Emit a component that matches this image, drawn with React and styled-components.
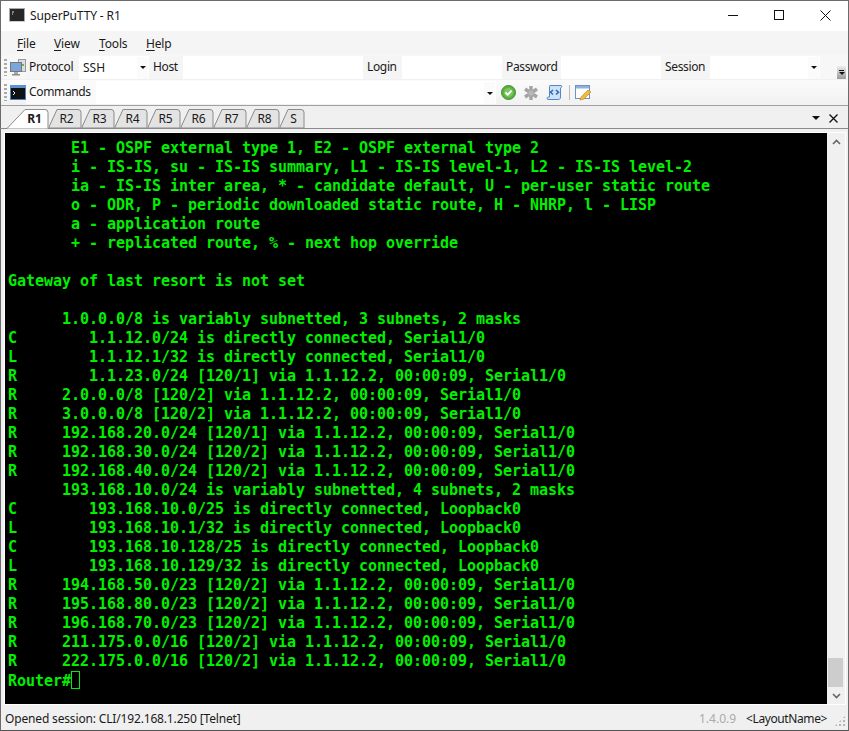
import React from "react";
import styled, { createGlobalStyle } from "styled-components";

const Global = createGlobalStyle`
  html, body { margin: 0; padding: 0; background: #fff; }
  body { width: 849px; height: 731px; overflow: hidden; }
`;

const Win = styled.div`
  width: 849px;
  height: 731px;
  box-sizing: border-box;
  border: 1px solid #6b6b6b;
  border-bottom-color: #555;
  display: flex;
  flex-direction: column;
  font-family: "Noto Sans", "Open Sans", sans-serif;
  color: #1a1a1a;
  background: #f0f0f0;
`;

const TitleBar = styled.div`
  height: 30px;
  background: #fff;
  display: flex;
  align-items: center;
  padding: 0 0 2px 8px;
  box-sizing: border-box;
  flex: none;
`;
const TitleText = styled.div`
  font-size: 12px;
  margin-left: 5px;
  flex: 1;
  letter-spacing: -0.13px;
`;
const WinBtn = styled.div`
  width: 46px;
  height: 28px;
  display: flex;
  align-items: center;
  justify-content: center;
  padding-left: 1px;
  box-sizing: border-box;
`;

const MenuBar = styled.div`
  height: 24px;
  background: #f5f5f5;
  display: flex;
  align-items: center;
  padding-left: 9px;
  font-size: 12px;
  flex: none;
`;
const MenuItem = styled.div`
  padding: 0 7px;
  width: ${p => p.$w}px;
  box-sizing: content-box;
  letter-spacing: -0.15px;
  span { text-decoration: underline; text-underline-offset: 2px; }
`;

const ToolRow = styled.div`
  height: ${p => p.$grad ? 26 : 25}px;
  background: ${p => p.$grad ? "linear-gradient(#fbfbfb, #f1f1f1)" : "#f7f7f7"};
  border-bottom: 1px solid ${p => p.$grad ? "#a0a0a0" : "#f0f0f0"};
  box-sizing: border-box;
  display: flex;
  align-items: center;
  flex: none;
  font-size: 12px;
`;
const Grip = styled.div`
  width: 3px;
  height: 17px;
  margin: 0 3px 0 3px;
  flex: none;
  background: repeating-linear-gradient(#aaa 0 2px, transparent 2px 4px);
`;
const ToolLabel = styled.div`
  padding-left: ${p => p.$pl || 4}px;
  height: 23px;
  line-height: 22px;
  background: ${p => p.$pale ? "#fafafa" : "#f5f5f5"};
  white-space: nowrap;
  width: ${p => p.$w}px;
  box-sizing: border-box;
  flex: none;
  letter-spacing: -0.35px;
`;
const Field = styled.div`
  width: ${p => p.$w}px;
  height: 23px;
  background: #fff;
  flex: none;
  display: flex;
  align-items: center;
  padding-left: 4px;
  box-sizing: border-box;
  font-size: 12px;
  padding-top: 1px;
`;
const Drop = styled.div`
  width: 11px;
  height: 100%;
  margin-left: auto;
  margin-right: 1px;
  display: flex;
  align-items: center;
  justify-content: center;
  background: #fbfbfb;
  &::after {
    content: "";
    border-left: 3px solid transparent;
    border-right: 3px solid transparent;
    border-top: 3px solid #111;
  }
`;
const Overflow = styled.div`
  width: 9px;
  height: 13px;
  margin: 0 2px 0 auto;
  align-self: flex-end;
  background: linear-gradient(#eee, #999);
  display: flex;
  flex-direction: column;
  align-items: center;
  justify-content: center;
  gap: 1px;
  &::before { content: ""; width: 5px; height: 1px; background: #111; }
  &::after {
    content: "";
    border-left: 3px solid transparent;
    border-right: 3px solid transparent;
    border-top: 3px solid #111;
  }
`;
const IconSlot = styled.div`
  flex: none;
  display: flex;
  align-items: center;
  margin-left: ${p => p.$ml || 0}px;
`;
const Sep = styled.div`
  width: 1px;
  height: 15px;
  background: #bbb;
  margin: 0 5px 0 6px;
`;

const TabStrip = styled.div`
  height: 22px;
  background: #f0f0f0;
  display: flex;
  align-items: flex-end;
  flex: none;
  padding-left: 6px;
`;
const TabsEnd = styled.div`
  margin-left: auto;
  align-self: center;
  display: flex;
  align-items: center;
  gap: 8px;
  margin: 3px 10px 0 auto;
`;
const Tab = styled.div`
  height: 19px;
  width: ${p => p.$w}px;
  box-sizing: border-box;
  position: relative;
  font-size: 12px;
  font-weight: ${p => p.$on ? 700 : 400};
  letter-spacing: -0.2px;
  display: flex;
  align-items: center;
  justify-content: center;
  padding-left: ${p => p.$on ? 13 : 2}px;
  color: #1a1a1a;
  flex: none;
  z-index: ${p => p.$on ? 2 : 1};
`;
const TabShape = styled.svg`
  position: absolute;
  left: 0;
  top: 0;
  overflow: visible;
`;
const TabLabel = styled.span`
  position: relative;
`;

const Body = styled.div`
  flex: 1;
  min-height: 0;
  background: #f0f0f0;
  border-top: 1px solid #8a8a8a;
  padding: 3px 2px 1px 3px;
  display: flex;
`;
const Frame = styled.div`
  flex: 1;
  display: flex;
  background: #000;
  min-width: 0;
  border: 1px solid #fff;
`;
const Term = styled.pre`
  flex: 1;
  margin: 0;
  padding: 6px 0 0 3px;
  background: #000;
  color: #00f000;
  font-family: "DejaVu Sans Mono", "Liberation Mono", monospace;
  font-weight: 700;
  font-size: 15px;
  letter-spacing: -0.03px;
  line-height: 19px;
  overflow: hidden;
`;
const Cursor = styled.span`
  display: inline-block;
  width: 7px;
  height: 16px;
  border: 1px solid #00f000;
  vertical-align: -3px;
`;
const ScrollBar = styled.div`
  width: 18px;
  background: #f0f0f0;
  display: flex;
  flex-direction: column;
  flex: none;
`;
const ScrollTrack = styled.div`
  flex: 1;
`;
const ScrollThumb = styled.div`
  height: 29px;
  margin: 0 2px 0 1px;
  background: #cdcdcd;
`;
const ScrollArrow = styled.div`
  height: 17px;
  display: flex;
  align-items: center;
  justify-content: center;
`;

const Status = styled.div`
  height: 24px;
  background: #f0f0f0;
  box-sizing: border-box;
  display: flex;
  align-items: center;
  padding: 1px 2px 0 4px;
  font-size: 12px;
  flex: none;
`;
const StatusMain = styled.div`
  flex: 1;
  letter-spacing: -0.16px;
`;
const Version = styled.div`
  color: #ababab;
  margin-right: 10px;
`;
const LayoutName = styled.div`
  letter-spacing: -0.4px;
`;
const Resize = styled.div`
  width: 12px;
  height: 12px;
  margin-left: 7px;
  align-self: flex-end;
  margin-bottom: 3px;
  background-image: radial-gradient(#b5b5b5 1px, transparent 1.2px);
  background-size: 4px 4px;
  clip-path: polygon(100% 0, 100% 100%, 0 100%);
`;

const lines = `       E1 - OSPF external type 1, E2 - OSPF external type 2
       i - IS-IS, su - IS-IS summary, L1 - IS-IS level-1, L2 - IS-IS level-2
       ia - IS-IS inter area, * - candidate default, U - per-user static route
       o - ODR, P - periodic downloaded static route, H - NHRP, l - LISP
       a - application route
       + - replicated route, % - next hop override

Gateway of last resort is not set

      1.0.0.0/8 is variably subnetted, 3 subnets, 2 masks
C        1.1.12.0/24 is directly connected, Serial1/0
L        1.1.12.1/32 is directly connected, Serial1/0
R        1.1.23.0/24 [120/1] via 1.1.12.2, 00:00:09, Serial1/0
R     2.0.0.0/8 [120/2] via 1.1.12.2, 00:00:09, Serial1/0
R     3.0.0.0/8 [120/2] via 1.1.12.2, 00:00:09, Serial1/0
R     192.168.20.0/24 [120/1] via 1.1.12.2, 00:00:09, Serial1/0
R     192.168.30.0/24 [120/2] via 1.1.12.2, 00:00:09, Serial1/0
R     192.168.40.0/24 [120/2] via 1.1.12.2, 00:00:09, Serial1/0
      193.168.10.0/24 is variably subnetted, 4 subnets, 2 masks
C        193.168.10.0/25 is directly connected, Loopback0
L        193.168.10.1/32 is directly connected, Loopback0
C        193.168.10.128/25 is directly connected, Loopback0
L        193.168.10.129/32 is directly connected, Loopback0
R     194.168.50.0/23 [120/2] via 1.1.12.2, 00:00:09, Serial1/0
R     195.168.80.0/23 [120/2] via 1.1.12.2, 00:00:09, Serial1/0
R     196.168.70.0/23 [120/2] via 1.1.12.2, 00:00:09, Serial1/0
R     211.175.0.0/16 [120/2] via 1.1.12.2, 00:00:09, Serial1/0
R     222.175.0.0/16 [120/2] via 1.1.12.2, 00:00:09, Serial1/0
Router#`;

const AppIcon = () => (
  <svg width="16" height="14" viewBox="0 0 16 14">
    <rect x="0.5" y="0.5" width="15" height="13" fill="#262626" stroke="#a8a8a8" />
    <path d="M0 13.5h16" stroke="#ccc" />
    <path d="M3 4h2M3 6h1" stroke="#ddd" />
  </svg>
);

const PcIcon = () => (
  <svg width="16" height="17" viewBox="0 0 16 17">
    <rect x="8.5" y="0.5" width="7" height="12" fill="#ddd" stroke="#999" />
    <rect x="12" y="5" width="2" height="2" fill="#5b5" />
    <rect x="0.5" y="3.5" width="11" height="9" fill="#7ba6dd" stroke="#777" />
    <rect x="4" y="13" width="4" height="2" fill="#aaa" />
    <rect x="2" y="15" width="8" height="1.5" fill="#8c8c8c" />
  </svg>
);

const CmdIcon = () => (
  <svg width="16" height="15" viewBox="0 0 16 15">
    <rect x="0.5" y="0.5" width="15" height="14" fill="#111" stroke="#4a7fbf" />
    <rect x="0" y="0" width="16" height="3" fill="#5b92d2" />
    <path d="M3 6l2 2-2 2" stroke="#eee" fill="none" />
  </svg>
);

const CheckIcon = () => (
  <svg width="15" height="15" viewBox="0 0 15 15">
    <circle cx="7.5" cy="7.5" r="7" fill="#5cb040" stroke="#3f8f33" />
    <circle cx="7.5" cy="7.5" r="4.6" fill="#7cc860" />
    <path d="M4.5 7.5l2.2 2.2 3.8-4" stroke="#fff" strokeWidth="1.8" fill="none" />
  </svg>
);

const GearIcon = () => (
  <svg width="16" height="16" viewBox="0 0 16 16">
    <g stroke="#a3a3a3" strokeWidth="3.4">
      <path d="M8 1v14M2 4l12 8M14 4L2 12" />
    </g>
    <circle cx="8" cy="8" r="2.6" fill="#b8b8b8" />
  </svg>
);

const ScriptIcon = () => (
  <svg width="17" height="17" viewBox="0 0 17 17">
    <path d="M4 1.5h11c1 0 1 2-.5 2.5V13c0 2-1 2.5-2 2.5H2c-1 0-1.5-2 0-2.5h1.5V3c0-1 .2-1.5.5-1.5z" fill="#cfe2f6" stroke="#4f88c6" />
    <path d="M7 6L4.5 8.3 7 10.5M10 6l2.5 2.3L10 10.5" stroke="#2468b8" strokeWidth="1.5" fill="none" />
  </svg>
);

const EditIcon = () => (
  <svg width="17" height="16" viewBox="0 0 17 16">
    <rect x="0.5" y="0.5" width="14" height="13" fill="#fff" stroke="#6c93c2" />
    <rect x="1" y="1" width="13" height="2.5" fill="#8fb3dd" />
    <path d="M5 15l1-3 7-7 3 2-7 7z" fill="#f4b840" stroke="#c98a20" strokeWidth="0.7" />
  </svg>
);

const ActiveOutline = () => (
  <TabShape width="42" height="20" viewBox="0 0 42 20">
    <path d="M-7 19.5H0L18 0.5H38Q41 0.5 41 3.5V19.5H43" fill="#fff" stroke="#8a8a8a" />
  </TabShape>
);

const TabOutline = ({ w }) => (
  <TabShape width={w} height="19" viewBox={`0 0 ${w} 19`}>
    <path d={`M0 18L8 0.5H${w - 4}Q${w - 1} 0.5 ${w - 1} 3.5V19H0z`} fill="#e3e3e3" stroke="#8a8a8a" />
  </TabShape>
);

const tabs = ["R2", "R3", "R4", "R5", "R6", "R7", "R8", "S"];

export default function App() {
  return (
    <>
      <Global />
      <Win>
        <TitleBar>
          <AppIcon />
          <TitleText>SuperPuTTY - R1</TitleText>
          <WinBtn>
            <svg width="11" height="11"><path d="M0 5.5h10" stroke="#111" /></svg>
          </WinBtn>
          <WinBtn>
            <svg width="11" height="11"><rect x="0.5" y="0.5" width="9" height="9" fill="none" stroke="#111" /></svg>
          </WinBtn>
          <WinBtn>
            <svg width="11" height="11"><path d="M0.5 0.5l10 10M10.5 0.5l-10 10" stroke="#111" /></svg>
          </WinBtn>
        </TitleBar>
        <MenuBar>
          <MenuItem $w={23}><span>F</span>ile</MenuItem>
          <MenuItem $w={31}><span>V</span>iew</MenuItem>
          <MenuItem $w={33}><span>T</span>ools</MenuItem>
          <MenuItem $w={30}><span>H</span>elp</MenuItem>
        </MenuBar>
        <ToolRow>
          <Grip />
          <IconSlot><PcIcon /></IconSlot>
          <ToolLabel $w={53} $pl={3}>Protocol</ToolLabel>
          <Field $w={70}>SSH<Drop /></Field>
          <ToolLabel $w={34}>Host</ToolLabel>
          <Field $w={180} />
          <ToolLabel $w={39}>Login</ToolLabel>
          <Field $w={100} />
          <ToolLabel $w={59}>Password</ToolLabel>
          <Field $w={100} />
          <ToolLabel $w={49}>Session</ToolLabel>
          <Field $w={110}><Drop /></Field>
          <Overflow />
        </ToolRow>
        <ToolRow $grad>
          <Grip />
          <IconSlot><CmdIcon /></IconSlot>
          <ToolLabel $w={70} $pl={3} $pale>Commands</ToolLabel>
          <Field $w={400}><Drop /></Field>
          <IconSlot $ml={5}><CheckIcon /></IconSlot>
          <IconSlot $ml={7}><GearIcon /></IconSlot>
          <IconSlot $ml={7}><ScriptIcon /></IconSlot>
          <Sep />
          <IconSlot><EditIcon /></IconSlot>
        </ToolRow>
        <TabStrip>
          <Tab $on $w={42}>
            <ActiveOutline />
            <TabLabel>R1</TabLabel>
          </Tab>
          {tabs.map(t => (
            <Tab key={t} $w={t === "S" ? 25 : 33}>
              <TabOutline w={t === "S" ? 25 : 33} />
              <TabLabel>{t}</TabLabel>
            </Tab>
          ))}
          <TabsEnd>
            <svg width="9" height="5"><path d="M0 0h8L4 4z" fill="#111" /></svg>
            <svg width="9" height="9"><path d="M0.5 0.5l8 8M8.5 0.5l-8 8" stroke="#111" strokeWidth="1.3" /></svg>
          </TabsEnd>
        </TabStrip>
        <Body>
          <Frame>
            <Term>{lines}<Cursor /></Term>
            <ScrollBar>
              <ScrollArrow>
                <svg width="9" height="6"><path d="M1 5l3.5-3.5L8 5" stroke="#666" strokeWidth="1.6" fill="none" /></svg>
              </ScrollArrow>
              <ScrollTrack />
              <ScrollThumb />
              <ScrollArrow>
                <svg width="9" height="6"><path d="M1 1l3.5 3.5L8 1" stroke="#666" strokeWidth="1.6" fill="none" /></svg>
              </ScrollArrow>
            </ScrollBar>
          </Frame>
        </Body>
        <Status>
          <StatusMain>Opened session: CLI/192.168.1.250 [Telnet]</StatusMain>
          <Version>1.4.0.9</Version>
          <LayoutName>&lt;LayoutName&gt;</LayoutName>
          <Resize />
        </Status>
      </Win>
    </>
  );
}
